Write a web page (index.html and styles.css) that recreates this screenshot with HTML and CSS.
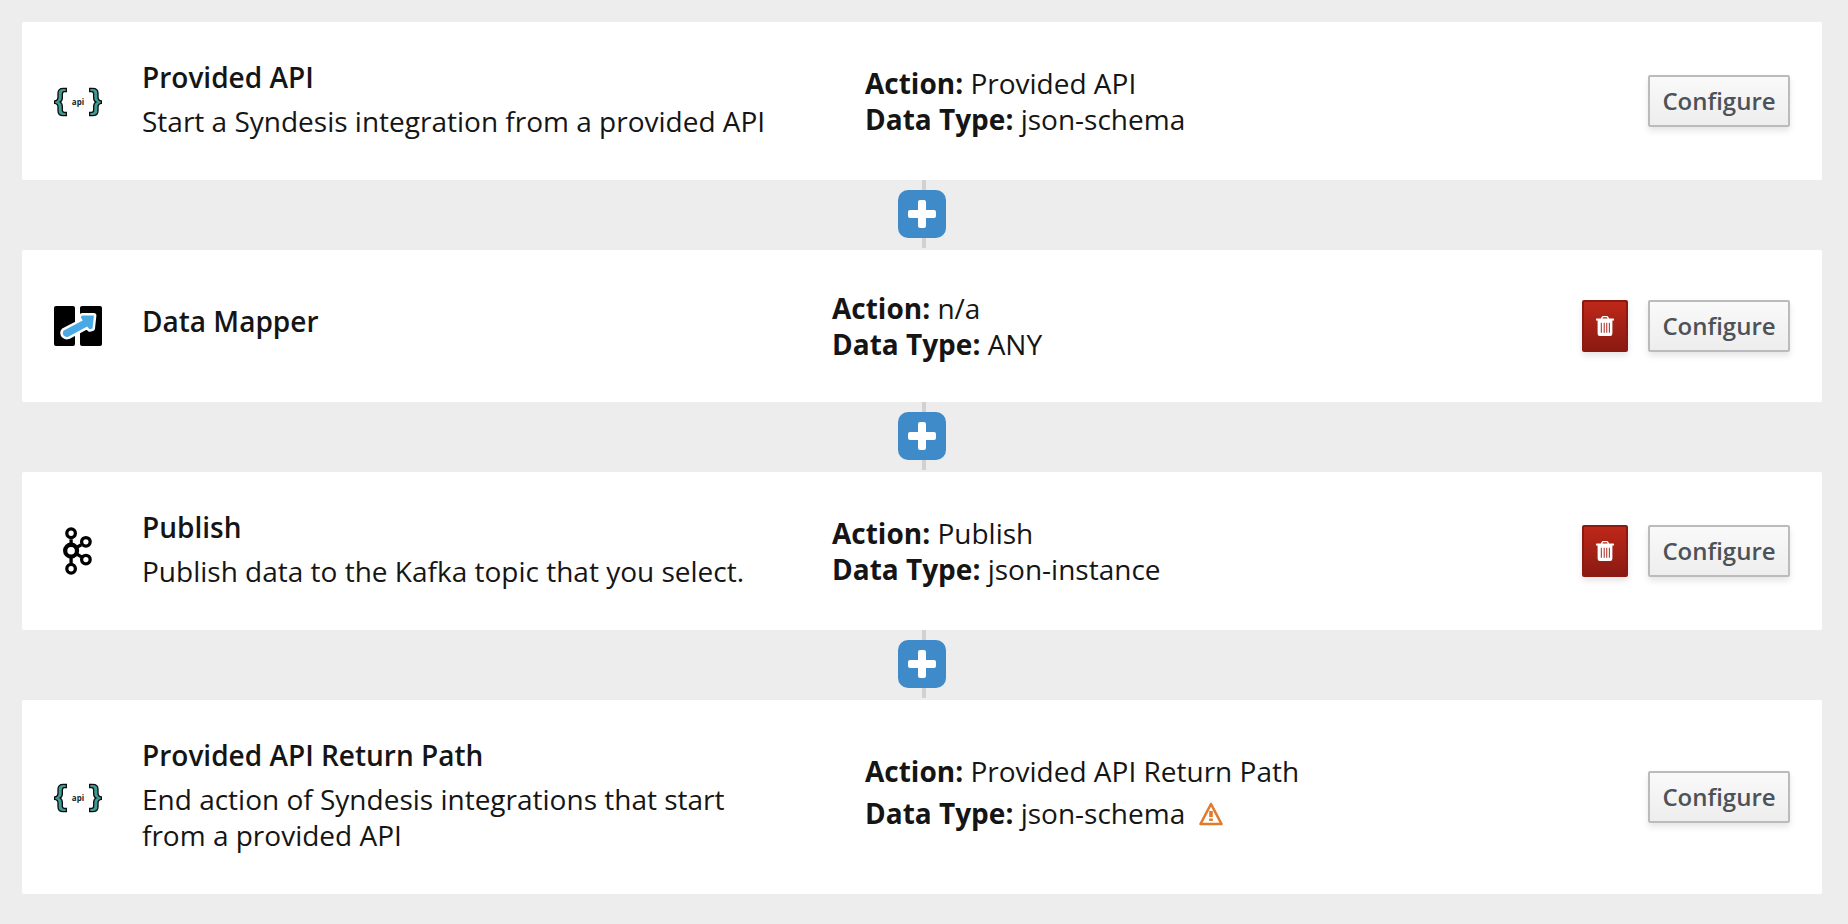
FILE: index.html
```html
<!DOCTYPE html>
<html lang="en">
<head>
<meta charset="utf-8">
<title>Integration flow</title>
<link rel="stylesheet" href="styles.css">
</head>
<body>
<svg class="sprite" aria-hidden="true">
  <symbol id="braces" viewBox="42 21 144 144">
    <g fill="#3f9c94" stroke="#0d0d0d" stroke-width="4" stroke-linejoin="miter">
      <path d="M79 55H70Q54 55 54 70V81Q54 92 44 93V100Q54 101 54 111V122Q54 137 70 137H79V127H73Q67 127 67 120V110Q67 99 60 96Q67 93 67 83V73Q67 65 73 65H79Z"/>
      <path d="M149 55H158Q174 55 174 70V81Q174 92 184 93V100Q174 101 174 111V122Q174 137 158 137H149V127H155Q161 127 161 120V110Q161 99 168 96Q161 93 161 83V73Q161 65 155 65H149Z"/>
    </g>
  </symbol>
  <symbol id="mapper" viewBox="0 0 48 48">
    <rect x="0" y="4" width="21" height="40" rx="2"/>
    <rect x="26" y="4" width="22" height="40" rx="2"/>
    <path d="M9.800 28.400L28.700 18.600L27 15.600Q27 13.700 28.500 13.500L39.900 13.500L38.500 26.600L35.500 27.200L33.200 24.600L14.200 34.700Q11.500 35.400 9.700 33.600Q7.800 30.600 9.800 28.400Z" fill="#49a9e5" stroke="#fff" stroke-width="5" stroke-linejoin="round" paint-order="stroke"/>
  </symbol>
  <symbol id="kafka" viewBox="12 38 144 146">
    <g fill="none" stroke="#000" stroke-width="10">
      <path d="M63 75V90M63 130V148M80 100L94 92M80 120L94 129"/>
      <circle cx="63" cy="57" r="13"/><circle cx="63" cy="165" r="13"/>
      <circle cx="108" cy="83" r="13"/><circle cx="108" cy="137" r="13"/>
      <circle cx="63" cy="110" r="18" stroke-width="13"/>
    </g>
  </symbol>
  <symbol id="plus" viewBox="0 0 28 28">
    <path d="M12 0h4q2 0 2 2v8h8q2 0 2 2v4q0 2-2 2h-8v8q0 2-2 2h-4q-2 0-2-2v-8H2q-2 0-2-2v-4q0-2 2-2h8V2q0-2 2-2z"/>
  </symbol>
  <symbol id="trash" viewBox="0 0 56 62">
    <path fill-rule="evenodd" d="M0 10Q0 8 2 8H15L18 2Q19 0 22 0H34Q37 0 38 2L41 8H54Q56 8 56 10V14H51V55Q51 62 44 62H12Q5 62 5 55V14H0ZM20 8H36L34 4H22ZM15 21V52H18V21ZM24 21V52H27V21ZM32 21V52H35V21ZM40 21V52H43V21Z"/>
  </symbol>
  <symbol id="warning" viewBox="0 0 24 24">
    <path d="M12 2L22.500 22H1.500Z" fill="none" stroke="#e07b2d" stroke-width="2.600" stroke-linejoin="round"/>
    <path d="M10.200 9h3.600v6h-3.600zM10.200 16.500h3.600V19h-3.600z" fill="#e07b2d"/>
  </symbol>
</svg>

<main class="flow">
  <section class="card">
    <svg class="icon" viewBox="0 0 48 48" aria-hidden="true"><use href="#braces" width="48" height="48"/><text class="api-text" x="24" y="28" text-anchor="middle">api</text></svg>
    <div class="info">
      <h2 class="title">Provided API</h2>
      <p class="description">Start a Syndesis integration from a provided API</p>
    </div>
    <div class="details">
      <div><strong>Action:</strong> Provided API</div>
      <div><strong>Data Type:</strong> json-schema</div>
    </div>
    <div class="actions"><button class="btn configure" type="button">Configure</button></div>
  </section>

  <div class="connector"><button class="add" type="button" aria-label="Add a step"><svg class="plus" aria-hidden="true"><use href="#plus"/></svg></button></div>

  <section class="card">
    <svg class="icon" aria-hidden="true"><use href="#mapper"/></svg>
    <div class="info">
      <h2 class="title">Data Mapper</h2>
    </div>
    <div class="details">
      <div><strong>Action:</strong> n/a</div>
      <div><strong>Data Type:</strong> ANY</div>
    </div>
    <div class="actions">
      <button class="btn danger" type="button" aria-label="Delete step"><svg class="trash" aria-hidden="true"><use href="#trash"/></svg></button>
      <button class="btn configure" type="button">Configure</button>
    </div>
  </section>

  <div class="connector"><button class="add" type="button" aria-label="Add a step"><svg class="plus" aria-hidden="true"><use href="#plus"/></svg></button></div>

  <section class="card">
    <svg class="icon" aria-hidden="true"><use href="#kafka"/></svg>
    <div class="info">
      <h2 class="title">Publish</h2>
      <p class="description">Publish data to the Kafka topic that you select.</p>
    </div>
    <div class="details">
      <div><strong>Action:</strong> Publish</div>
      <div><strong>Data Type:</strong> json-instance</div>
    </div>
    <div class="actions">
      <button class="btn danger" type="button" aria-label="Delete step"><svg class="trash" aria-hidden="true"><use href="#trash"/></svg></button>
      <button class="btn configure" type="button">Configure</button>
    </div>
  </section>

  <div class="connector"><button class="add" type="button" aria-label="Add a step"><svg class="plus" aria-hidden="true"><use href="#plus"/></svg></button></div>

  <section class="card">
    <svg class="icon" viewBox="0 0 48 48" aria-hidden="true"><use href="#braces" width="48" height="48"/><text class="api-text" x="24" y="28" text-anchor="middle">api</text></svg>
    <div class="info">
      <h2 class="title">Provided API Return Path</h2>
      <p class="description">End action of Syndesis integrations that start from a provided API</p>
    </div>
    <div class="details">
      <div><strong>Action:</strong> Provided API Return Path</div>
      <div class="flagged"><strong>Data Type:</strong> json-schema <svg class="warning" role="img" aria-label="Warning"><use href="#warning"/></svg></div>
    </div>
    <div class="actions"><button class="btn configure" type="button">Configure</button></div>
  </section>
</main>
</body>
</html>
```

FILE: styles.css
```css
* {
  box-sizing: border-box;
}

body {
  margin: 0;
  background: #ededed;
  color: #151515;
  font: 400 28px/36px "Open Sans", "Noto Sans", sans-serif;
}

.sprite {
  position: absolute;
  width: 0;
  height: 0;
}

.flow {
  padding: 22px 26px 30px 22px;
}

.card {
  display: flex;
  align-items: center;
  padding: 39px 32px;
  background: #fff;
  border-radius: 2px;
}

.icon {
  flex: none;
  width: 48px;
  height: 48px;
  margin-right: 40px;
}

.api-text {
  font: 700 8px "Open Sans", sans-serif;
  fill: #222;
}

.info,
.details {
  flex: 1 1 0;
  min-width: 0;
  padding: 1px 80px 1px 0;
}

.info {
  padding-top: 0;
  padding-bottom: 0;
}

.title {
  margin: 0 0 10px;
  font-size: 28px;
  font-weight: 600;
  line-height: 32px;
}

.description {
  margin: 0 0 2px;
}

strong {
  font-weight: 700;
}

.flagged {
  padding-bottom: 4px;
  line-height: 48px;
}

.warning {
  width: 24px;
  height: 24px;
  margin-left: 6px;
  vertical-align: -2px;
}

.actions {
  display: flex;
  gap: 20px;
  margin-left: 60px;
}

.btn {
  height: 52px;
  padding: 0 12px;
  border: 2px solid #bbb;
  border-radius: 2px;
  background: linear-gradient(#fafafa, #ededed);
  background-origin: border-box;
  box-shadow: 0 4px 6px rgba(3, 3, 3, 0.1);
  color: #4d5258;
  font: 600 24px/36px "Open Sans", "Noto Sans", sans-serif;
  cursor: pointer;
}

.configure {
  min-width: 142px;
}

.danger {
  display: flex;
  align-items: center;
  border-color: #8b1a10;
  background: linear-gradient(#bd2819, #8b1a12);
  color: #fff;
}

.trash {
  width: 18px;
  height: 20px;
  fill: currentColor;
}

.connector {
  position: relative;
  display: flex;
  justify-content: center;
  padding: 10px 0 12px;
}

.connector::before {
  content: "";
  position: absolute;
  top: 0;
  bottom: 2px;
  left: 50%;
  width: 4px;
  background: #d1d1d1;
}

.add {
  position: relative;
  display: grid;
  place-items: center;
  width: 48px;
  height: 48px;
  padding: 0;
  border: 0;
  border-radius: 10px;
  background: #3f8ac9;
  color: #fff;
  cursor: pointer;
}

.plus {
  width: 28px;
  height: 28px;
  fill: currentColor;
}
```
